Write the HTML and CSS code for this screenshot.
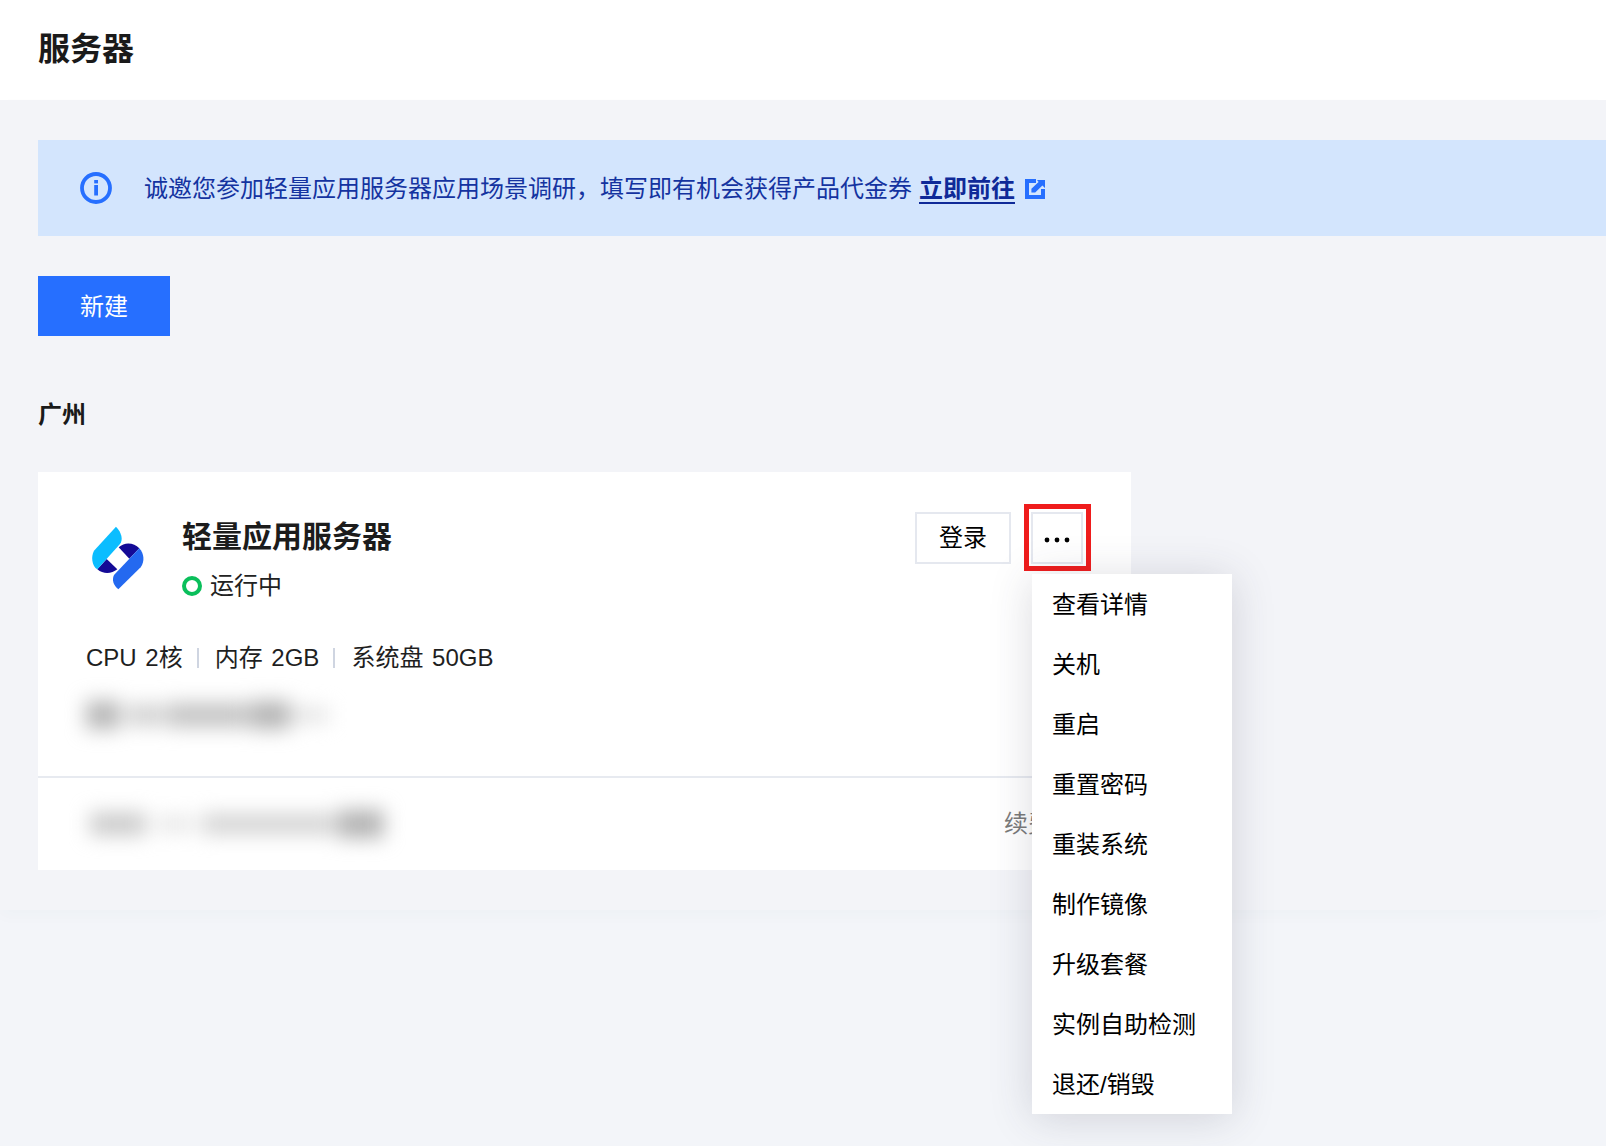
FILE: index.html
```html
<!DOCTYPE html>
<html lang="zh-CN">
<head>
<meta charset="utf-8">
<title>服务器</title>
<link rel="stylesheet" href="styles.css">
</head>
<body>
<header class="page-header"><h1 class="page-title">服务器</h1></header>
<main class="content">
  <div class="notice">
    <svg class="notice-icon" viewBox="0 0 32 32" aria-hidden="true">
      <circle cx="16" cy="16" r="14" fill="none" stroke="#266fff" stroke-width="3.8"/>
      <rect x="14.200" y="13" width="3.800" height="10.500" fill="#266fff"/>
      <rect x="14.200" y="8" width="3.800" height="3.400" fill="#266fff"/>
    </svg>
    <p class="notice-text">诚邀您参加轻量应用服务器应用场景调研，填写即有机会获得产品代金券<a class="notice-link" href="#">立即前往</a></p>
    <svg class="notice-ext" viewBox="0 0 20 20" aria-hidden="true">
      <path fill="#266fff" d="M0 0H11V4H4V16H16V10H20V20H0Z"/>
      <path fill="#266fff" d="M12 1H20V9L17.4 6.6L10.2 13.6H6.4V9.8L13.6 3Z"/>
    </svg>
  </div>
  <button class="primary-btn">新建</button>
  <h2 class="region">广州</h2>
  <section class="card">
    <div class="card-main">
      <div class="card-head">
        <svg class="logo" viewBox="0 0 240 240" aria-hidden="true">
          <path fill="#140a96" d="M52 148L80 117L112 148C95 162 70 164 52 148Z"/>
          <path fill="#140a96" d="M116 82C135 64 162 68 178 85L148 116Z"/>
          <path fill="#0bbdff" d="M108 20C125 38 130 58 120 72L52 148C36 138 32 110 42 92Z"/>
          <path fill="#2469f0" d="M115 208C100 195 95 180 102 165L178 85C192 100 195 125 182 142Z"/>
        </svg>
        <div class="head-text">
          <div class="card-title">轻量应用服务器</div>
          <div class="status"><span class="status-dot"></span>运行中</div>
        </div>
        <div class="actions">
          <button class="ghost-btn">登录</button>
          <button class="more-btn" aria-label="更多">
            <svg class="dots" viewBox="0 0 26 6" aria-hidden="true"><circle cx="3" cy="3" r="2.400"/><circle cx="13" cy="3" r="2.400"/><circle cx="23" cy="3" r="2.400"/></svg>
          </button>
          <span class="highlight"></span>
        </div>
      </div>
      <div class="specs">
        <span>CPU 2核</span><i class="sep"></i><span>内存 2GB</span><i class="sep"></i><span>系统盘 50GB</span>
      </div>
      <div class="blur-line blur-a">
        <b class="b1"></b><b class="b2"></b><b class="b3"></b><b class="b4"></b><b class="b5"></b>
      </div>
    </div>
    <div class="card-foot">
      <div class="blur-line blur-b">
        <b class="b6"></b><b class="b7"></b><b class="b8"></b><b class="b9"></b>
      </div>
      <span class="renew">续费</span>
    </div>
    <ul class="menu">
      <li>查看详情</li><li>关机</li><li>重启</li><li>重置密码</li><li>重装系统</li><li>制作镜像</li><li>升级套餐</li><li>实例自助检测</li><li>退还/销毁</li>
    </ul>
  </section>
</main>
</body>
</html>
```
FILE: styles.css
```css
* { box-sizing: border-box; }
html, body { margin: 0; height: 100%; }
body {
  background: #f3f5f9;
  color: #000;
  font-family: "Liberation Sans", "Noto Sans CJK SC", sans-serif;
  font-size: 24px;
  overflow: hidden;
}
.page-header {
  height: 100px;
  background: #fff;
  display: flex;
  align-items: center;
  padding: 0 0 2px 38px;
}
.page-title { margin: 0; font-size: 32px; font-weight: 700; color: #1a1a1a; line-height: 1; }
.content {
  position: relative;
  height: 810px;
  padding: 40px 0 0 38px;
  background: #f3f4f8;
  box-shadow: 0 6px 14px rgba(60, 70, 90, .025);
}
.notice {
  height: 96px;
  display: flex;
  align-items: center;
  padding-left: 42px;
  background: #d3e5fd;
}
.notice-icon { width: 32px; height: 32px; flex: none; }
.notice-text { margin: 2px 0 0 32px; color: #1433a0; line-height: 32px; }
.notice-link {
  margin-left: 7px;
  color: #0f2a98;
  font-weight: 700;
  text-decoration: underline;
  text-decoration-thickness: 2px;
  text-underline-offset: 5px;
}
.notice-ext { width: 20px; height: 20px; margin: 2px 0 0 10px; flex: none; }
.primary-btn {
  display: block;
  width: 132px;
  height: 60px;
  margin-top: 40px;
  border: 0;
  padding: 0 0 4px;
  background: #266fff;
  color: #fff;
  font: inherit;
}
.region { margin: 62px 0 0; font-size: 24px; font-weight: 700; line-height: 34px; color: #1a1a1a; }
.card {
  position: relative;
  width: 1093px;
  height: 398px;
  margin-top: 40px;
  background: #fff;
}
.card-main { height: 306px; padding: 40px 48px 0 48px; border-bottom: 2px solid #e7eaf0; }
.card-head { display: flex; align-items: flex-start; }
.logo { width: 80px; height: 80px; margin: 8px 0 0 -6px; flex: none; }
.head-text { margin-left: 22px; }
.card-title { font-size: 30px; font-weight: 700; line-height: 46px; color: #1c1c1c; margin-top: 2px; }
.status { display: flex; align-items: center; margin-top: 9px; line-height: 34px; color: #222; }
.status-dot { width: 20px; height: 20px; margin-right: 8px; border: 4.5px solid #0abf5b; border-radius: 50%; }
.actions { position: relative; margin-left: auto; display: flex; gap: 20px; }
.ghost-btn, .more-btn {
  height: 52px;
  padding: 0;
  background: #fff;
  border: 2px solid #e5e8ef;
  font: inherit;
  color: #000;
}
.ghost-btn { width: 96px; padding-bottom: 6px; }
.more-btn { width: 52px; display: flex; align-items: center; justify-content: center; padding-top: 4px; }
.dots { width: 26px; height: 6px; fill: #000; }
.highlight {
  position: absolute;
  right: -8px;
  top: -8px;
  width: 67px;
  height: 67px;
  border: 5px solid #ef1c1c;
}
.specs { display: flex; align-items: center; margin-top: 38px; line-height: 34px; color: #1f1f1f; word-spacing: 2px; }
.sep { width: 2px; height: 20px; margin: 0 16px 0 14px; background: #cfd5e1; }
.blur-line { display: flex; align-items: center; filter: blur(10px); }
.blur-line b { display: block; }
.blur-a { margin-top: 26px; height: 28px; }
.blur-b { height: 28px; }
.b1 { width: 34px; height: 28px; background: #b4b4b4; margin-right: 8px; }
.b2 { width: 34px; height: 20px; background: #cccccc; margin-right: 4px; }
.b3 { width: 82px; height: 24px; background: #c2c2c2; margin-right: 2px; }
.b4 { width: 40px; height: 28px; background: #b4b4b4; margin-right: 2px; }
.b5 { width: 36px; height: 14px; background: #e0e0e0; }
.b6 { width: 56px; height: 22px; background: #c8c8c8; margin-right: 12px; }
.b7 { width: 34px; height: 14px; background: #e2e2e2; margin-right: 10px; }
.b8 { width: 134px; height: 20px; background: #d2d2d2; margin-right: 2px; }
.b9 { width: 46px; height: 28px; background: #b2b2b2; }
.card-foot { display: flex; align-items: center; justify-content: space-between; height: 92px; padding: 0 79px 0 52px; }
.renew { color: #7a7a7a; line-height: 34px; }
.menu {
  position: absolute;
  left: 994px;
  top: 102px;
  width: 200px;
  margin: 0;
  padding: 0;
  list-style: none;
  background: #fff;
  box-shadow: 0 4px 40px rgba(54, 58, 80, .18);
}
.menu li { height: 60px; line-height: 60px; padding: 1px 0 0 20px; color: #000; }
```
